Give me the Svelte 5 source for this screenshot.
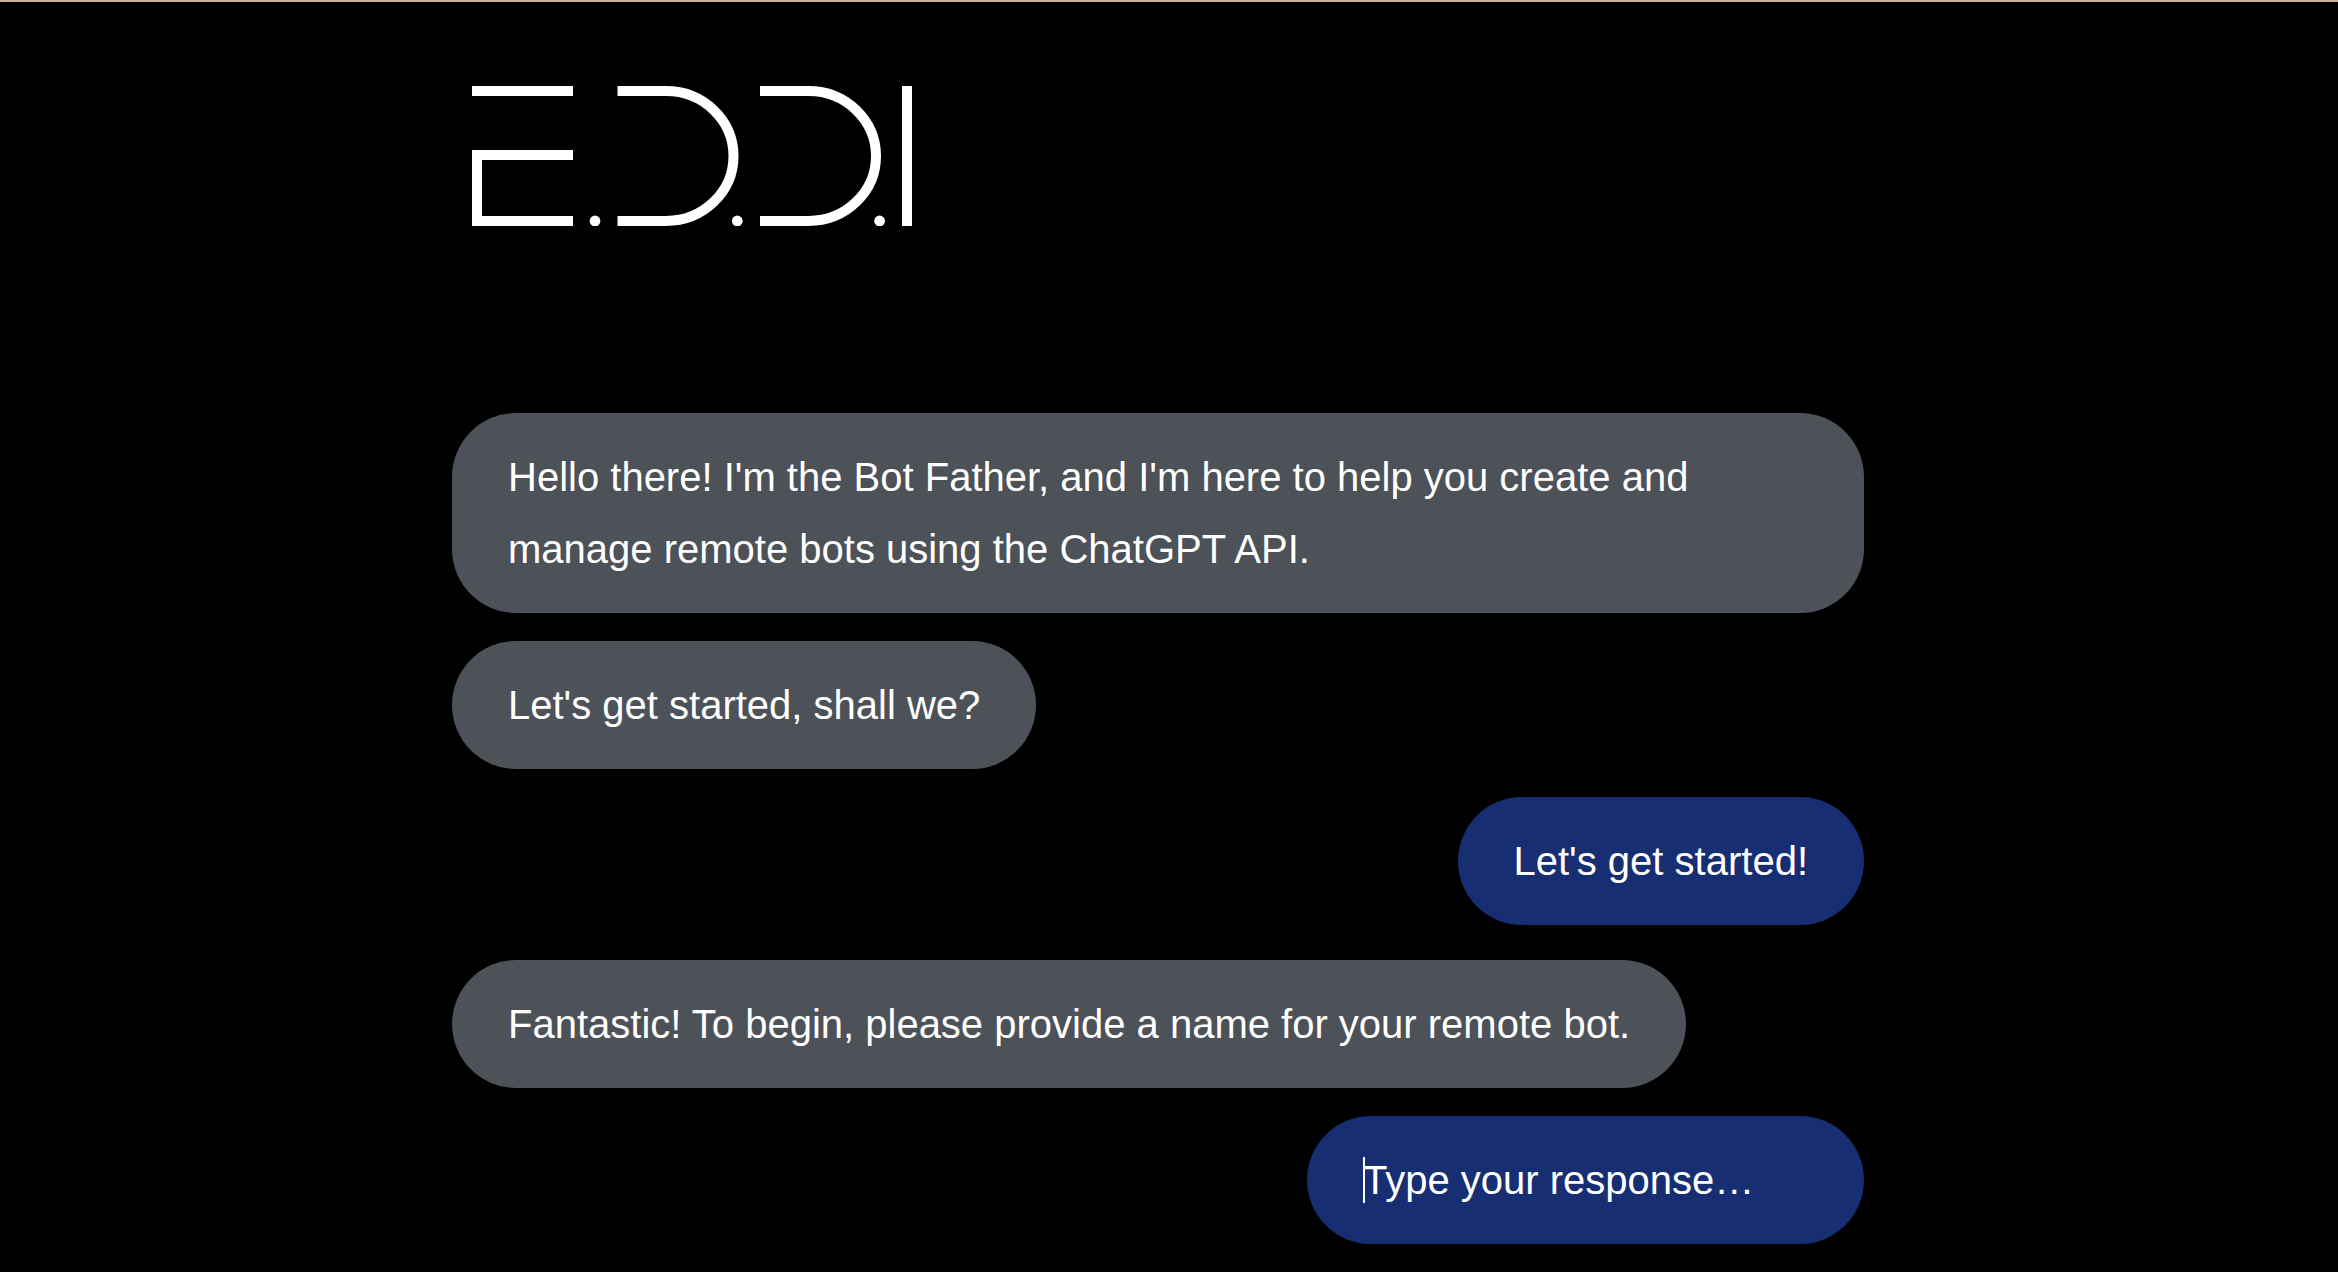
<script>
  const exchanges = [
    [
      { from: 'bot', text: "Hello there! I'm the Bot Father, and I'm here to help you create and manage remote bots using the ChatGPT API." },
      { from: 'bot', text: "Let's get started, shall we?" },
      { from: 'user', text: "Let's get started!" }
    ],
    [{ from: 'bot', text: 'Fantastic! To begin, please provide a name for your remote bot.' }]
  ];

  let reply = $state('');
</script>

<div class="page">
  <main class="chat">
    <header>
      <svg class="logo" viewBox="0 0 440 140" role="img" aria-label="E.D.D.I">
        <g fill="none" stroke="#fff" stroke-width="10">
          <path d="M0 5H101" />
          <path d="M101 69H5V135H101" />
          <path d="M145.500 5H194A67.500 65 0 0 1 194 135H145.500" />
          <path d="M288 5H336.500A67.500 65 0 0 1 336.500 135H288" />
          <path d="M435 0V140" />
        </g>
        <g fill="#fff">
          <circle cx="123" cy="135" r="5.4" />
          <circle cx="265.300" cy="135" r="5.4" />
          <circle cx="407.600" cy="135" r="5.4" />
        </g>
      </svg>
    </header>

    <div class="log">
      {#each exchanges as messages}
        <section class="exchange">
          {#each messages as message}
            <p class="bubble {message.from}">{message.text}</p>
          {/each}
        </section>
      {/each}
    </div>

    <form class="composer" onsubmit={(event) => event.preventDefault()}>
      <input
        class="bubble user"
        type="text"
        aria-label="Your response"
        placeholder="Type your response…"
        autocomplete="off"
        bind:value={reply}
      />
      {#if !reply}
        <span class="caret"></span>
      {/if}
    </form>
  </main>
</div>

<style>
  :global(body) {
    background: #000;
  }

  .page {
    box-sizing: border-box;
    min-height: 100vh;
    padding: 84px 22px 28px 0;
    border-top: 2px solid #c9b38f;
    background: #000;
    color: #fff;
    font-family: Helvetica, 'Liberation Sans', Arial, sans-serif;
    font-size: 40px;
    line-height: 72px;
  }

  .chat {
    max-width: 1412px;
    margin: 0 auto;
  }

  header {
    padding: 0 20px;
    margin-bottom: 187px;
  }

  .logo {
    display: block;
    width: 440px;
    max-width: 100%;
  }

  .log {
    display: flex;
    flex-direction: column;
    gap: 35px;
  }

  .exchange {
    display: flex;
    flex-direction: column;
    gap: 28px;
  }

  .bubble {
    box-sizing: border-box;
    max-width: 100%;
    margin: 0;
    padding: 28px 56px;
    border: 0;
    border-radius: 64px;
    color: #fff;
    font: inherit;
  }

  .bot {
    align-self: flex-start;
    background: #4d5158;
  }

  .user {
    align-self: flex-end;
    background: #182e72;
  }

  .composer {
    position: relative;
    width: 557px;
    max-width: 100%;
    margin: 28px 0 0 auto;
  }

  input.bubble {
    display: block;
    width: 100%;
    height: 128px;
    outline: none;
    caret-color: #fff;
  }

  input::placeholder {
    color: #fff;
    opacity: 1;
  }

  .caret {
    position: absolute;
    top: 41px;
    left: 56px;
    width: 2px;
    height: 46px;
    background: #fff;
  }

  .composer:focus-within .caret {
    display: none;
  }
</style>
